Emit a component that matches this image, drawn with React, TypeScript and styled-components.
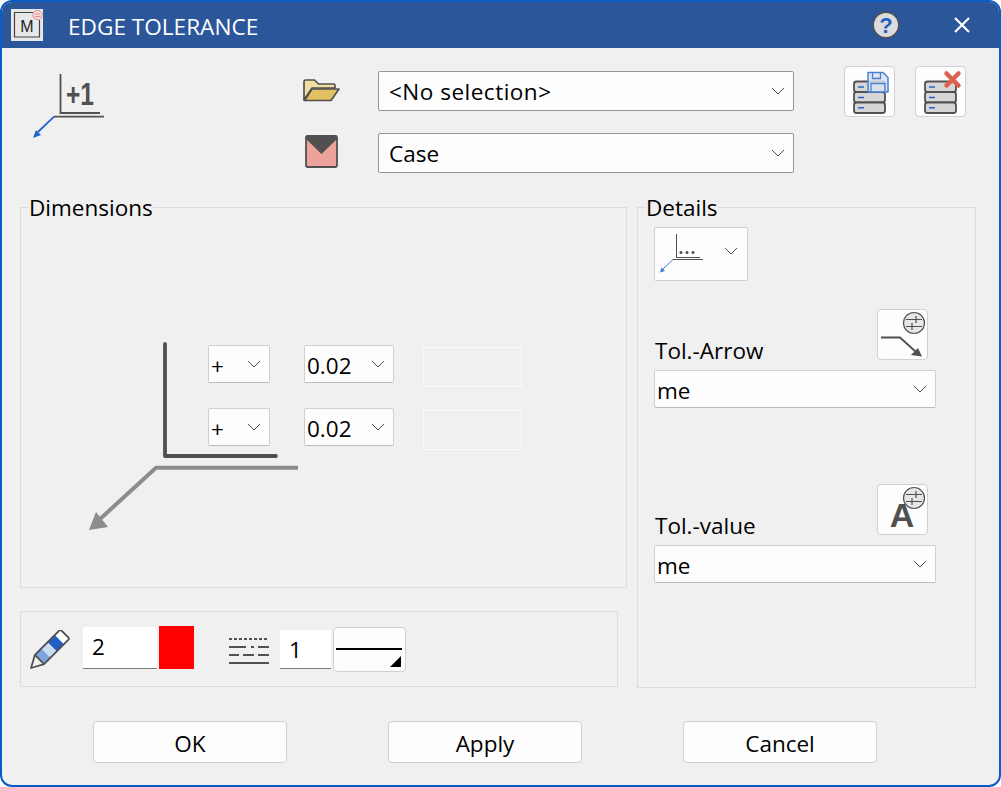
import React from 'react'
import styled, { createGlobalStyle } from 'styled-components'

const GlobalStyle = createGlobalStyle`
  html, body {
    margin: 0;
    padding: 0;
    background: #ffffff;
  }
  * {
    box-sizing: border-box;
  }
`

function Chevron() {
  return (
    <ChevronSvg viewBox="0 0 14 8" width="14" height="8">
      <path d="M1 1l6 6 6-6" fill="none" stroke="#505050" strokeWidth="1" />
    </ChevronSvg>
  )
}

function AppIcon() {
  return (
    <svg width="32" height="32" viewBox="0 0 32 32">
      <rect width="32" height="32" fill="#e8e8e8" />
      <path d="M22 3.500H3.500v24.500h25V11" fill="none" stroke="#444" strokeWidth="1.200" />
      <text x="16" y="22.500" textAnchor="middle" fontFamily="Liberation Sans, sans-serif" fontSize="16" fill="#222">M</text>
      <circle cx="26.500" cy="6" r="4.600" fill="#f4dcdc" stroke="#e58a8a" strokeWidth="1" />
      <path d="M24 5h5M24 7.500h5" stroke="#e58a8a" strokeWidth="1" />
    </svg>
  )
}

function HelpIcon() {
  return (
    <svg width="28" height="28" viewBox="0 0 28 28">
      <circle cx="14" cy="14" r="12.700" fill="#dcdcdc" stroke="#505050" strokeWidth="1.400" />
      <text x="14" y="22" textAnchor="middle" fontFamily="Liberation Sans, sans-serif" fontWeight="700" fontSize="22" fill="#1f5fc4">?</text>
    </svg>
  )
}

function CloseIcon() {
  return (
    <svg width="16" height="16" viewBox="0 0 16 16">
      <path d="M1 1l14 14M15 1L1 15" stroke="#fff" strokeWidth="2.200" />
    </svg>
  )
}

function EdgeIcon() {
  return (
    <svg width="72" height="66" viewBox="0 0 72 66">
      <path d="M27.500 0v39H67" fill="none" stroke="#505050" strokeWidth="1.800" />
      <path d="M21 42.700h50" stroke="#505050" strokeWidth="1.800" />
      <path d="M21 42.700L5 58" stroke="#1f66cc" strokeWidth="1.800" />
      <path d="M0 64l3-8 5 5z" fill="#1f66cc" />
      <text x="33" y="31" fontFamily="Liberation Sans, sans-serif" fontWeight="700" fontSize="31" textLength="28" lengthAdjust="spacingAndGlyphs" fill="#505050">+1</text>
    </svg>
  )
}

function FolderIcon() {
  return (
    <svg width="37" height="23" viewBox="0 0 37 23">
      <path d="M1 21V2.500C1 1.500 1.500 1 2.500 1h9l4 4h15c1 0 1.500.5 1.500 1.500V9H9L1 21z" fill="#f0dfa4" stroke="#505050" strokeWidth="1.700" strokeLinejoin="round" />
      <path d="M1.500 21.500L9 10h27l-8 11.500z" fill="#e2c162" stroke="#505050" strokeWidth="1.700" strokeLinejoin="round" />
    </svg>
  )
}

function EnvelopeIcon() {
  return (
    <svg width="33" height="33" viewBox="0 0 33 33">
      <rect x="1" y="1" width="31" height="31" rx="1.500" fill="#eda39b" stroke="#505050" strokeWidth="1.800" />
      <path d="M1 1h31v3L16.500 19 1 4z" fill="#505050" />
    </svg>
  )
}

// three drives, coordinates are relative to the 51px button
function DbStack() {
  return (
    <g>
      <rect x="10" y="15.500" width="31" height="10.500" rx="2.500" fill="#d6d6d6" stroke="#505050" strokeWidth="1.800" />
      <rect x="10" y="26" width="31" height="10.500" rx="2.500" fill="#d6d6d6" stroke="#505050" strokeWidth="1.800" />
      <rect x="10" y="36.500" width="31" height="10.500" rx="2.500" fill="#d6d6d6" stroke="#505050" strokeWidth="1.800" />
      <path d="M14 21h6M14 31.500h6M14 41.800h6" stroke="#1f66cc" strokeWidth="1.500" />
    </g>
  )
}

function DbSaveIcon() {
  return (
    <svg width="49" height="49" viewBox="1 1 49 49">
      <DbStack />
      <path d="M24 6.500h15l5 5v14.500H24z" fill="#d8e2f2" fillOpacity=".85" stroke="#4a80d0" strokeWidth="1.500" strokeLinejoin="round" />
      <path d="M28.500 6.500v6h8v-6M27 26v-8.500h14V26" fill="none" stroke="#4a80d0" strokeWidth="1.300" />
    </svg>
  )
}

function DbDeleteIcon() {
  return (
    <svg width="49" height="49" viewBox="1 1 49 49">
      <DbStack />
      <path d="M31.500 7.500l12 12M43.500 7.500l-12 12" stroke="#dd5f50" strokeWidth="4.500" strokeLinecap="round" />
    </svg>
  )
}

function MiniEdgeIcon() {
  return (
    <svg width="46" height="40" viewBox="0 0 46 40">
      <path d="M16.500 0v23.500H40" fill="none" stroke="#505050" strokeWidth="1" />
      <path d="M13 25.500h30" stroke="#505050" strokeWidth="1" />
      <path d="M13 25.500L2 36" stroke="#3f7ad6" strokeWidth="1" />
      <path d="M0 38.500l1.500-5 3.500 3.500z" fill="#3f7ad6" />
      <circle cx="21" cy="18.500" r="1.500" fill="#505050" />
      <circle cx="27" cy="18.500" r="1.500" fill="#505050" />
      <circle cx="33" cy="18.500" r="1.500" fill="#505050" />
    </svg>
  )
}

function ToleranceBadge() {
  return (
    <BadgeSvg viewBox="0 0 24 24" width="24" height="24">
      <circle cx="12" cy="12" r="10.500" fill="#e6e6e6" stroke="#505050" strokeWidth="1.200" />
      <path d="M4 8.500h16M4 15.500h16M14 5v7M10 12v7" stroke="#505050" strokeWidth="1.200" />
    </BadgeSvg>
  )
}

function ArrowStyleIcon() {
  return (
    <svg width="44" height="22" viewBox="0 0 44 22">
      <path d="M0 1.500h19L35 16" fill="none" stroke="#505050" strokeWidth="1.800" />
      <path d="M41 20.500l-11-1.500 7-7z" fill="#505050" />
    </svg>
  )
}

function PencilIcon() {
  return (
    <svg width="40" height="40" viewBox="0 0 40 40">
      <g transform="translate(1 38) rotate(45)">
        <rect x="-6.500" y="-48" width="13" height="8" fill="#ffffff" />
        <rect x="-6.500" y="-40" width="13" height="10" fill="#1f5fc4" />
        <rect x="-6.500" y="-30" width="13" height="9" fill="#c9dcf4" />
        <rect x="-6.500" y="-21" width="13" height="9" fill="#7ea6e0" />
        <path d="M-6.500 -12h13L0 0z" fill="#f0f0f0" />
        <path d="M-5 -48H5a1.500 1.500 0 0 1 1.500 1.500V-12L0 0-6.500 -12V-46.500A1.500 1.500 0 0 1-5 -48zM-6.500 -12h13" fill="none" stroke="#505050" strokeWidth="1.800" strokeLinejoin="round" />
      </g>
    </svg>
  )
}

function LineStylesIcon() {
  return (
    <svg width="40" height="27" viewBox="0 0 40 27">
      <path d="M0 1h40" stroke="#505050" strokeWidth="2" strokeDasharray="3 2" />
      <path d="M0 9h17M22 9h3M29 9h11" stroke="#505050" strokeWidth="2" />
      <path d="M0 17h10M14 17h11M29 17h11" stroke="#505050" strokeWidth="2" />
      <path d="M0 25h40" stroke="#505050" strokeWidth="2" />
    </svg>
  )
}

function DimensionSketch() {
  return (
    <SketchSvg width="230" height="200" viewBox="0 0 230 200">
      <path d="M77 3v112h111" fill="none" stroke="#505050" strokeWidth="3.800" strokeLinecap="round" strokeLinejoin="round" />
      <path d="M210 126.700H68L11 179" fill="none" stroke="#8c8c8c" strokeWidth="4" strokeLinejoin="round" />
      <path d="M1 189l7-18 12 15z" fill="#8c8c8c" />
    </SketchSvg>
  )
}

function Combo({ value, width, height, strong, tracking }: { value: string; width: number; height: number; strong?: boolean; tracking?: number }) {
  return (
    <ComboBox $width={width} $height={height} $strong={strong} $tracking={tracking}>
      <ComboText $strong={strong}>{value}</ComboText>
      <Chevron />
    </ComboBox>
  )
}

export default function App() {
  return (
    <>
      <GlobalStyle />
      <Dialog>
        <TitleBar>
          <AppIcon />
          <Title>EDGE TOLERANCE</Title>
          <TitleActions>
            <HelpIcon />
            <CloseIcon />
          </TitleActions>
        </TitleBar>

        <TopRow>
          <EdgeSlot>
            <EdgeIcon />
          </EdgeSlot>
          <SelectorColumn>
            <SelectorRow>
              <SelectorIcon $inset={0} $lift={2}>
                <FolderIcon />
              </SelectorIcon>
              <Combo value="<No selection>" width={416} height={40} strong tracking={0.5} />
            </SelectorRow>
            <SelectorRow>
              <SelectorIcon $inset={2} $lift={4}>
                <EnvelopeIcon />
              </SelectorIcon>
              <Combo value="Case" width={416} height={40} strong />
            </SelectorRow>
          </SelectorColumn>
          <DbActions>
            <IconButton>
              <DbSaveIcon />
            </IconButton>
            <IconButton>
              <DbDeleteIcon />
            </IconButton>
          </DbActions>
        </TopRow>

        <MainRow>
          <LeftColumn>
            <DimensionsGroup>
              <Legend>Dimensions</Legend>
              <DimensionSketch />
              <ToleranceGrid>
                <Combo value="+" width={62} height={38} />
                <Combo value="0.02" width={90} height={38} />
                <GhostInput />
                <Combo value="+" width={62} height={38} />
                <Combo value="0.02" width={90} height={38} />
                <GhostInput />
              </ToleranceGrid>
            </DimensionsGroup>
            <PenBar>
              <PencilSlot>
                <PencilIcon />
              </PencilSlot>
              <PenValue $width={74} $height={42} $top={0} $raise={3}>2</PenValue>
              <ColorSwatch />
              <LineStyleSlot>
                <LineStylesIcon />
              </LineStyleSlot>
              <PenValue $width={51} $height={39} $top={3} $raise={0}>1</PenValue>
              <LineButton />
            </PenBar>
          </LeftColumn>

          <DetailsGroup>
            <Legend>Details</Legend>
            <IconCombo>
              <MiniEdgeIcon />
              <Chevron />
            </IconCombo>
            <DetailBlock $top={28}>
              <DetailHead>
                <DetailLabel>Tol.-Arrow</DetailLabel>
                <SquareButton>
                  <ToleranceBadge />
                  <ArrowStyleIcon />
                </SquareButton>
              </DetailHead>
              <Combo value="me" width={282} height={38} />
            </DetailBlock>
            <DetailBlock $top={76}>
              <DetailHead>
                <DetailLabel>Tol.-value</DetailLabel>
                <SquareButton>
                  <ToleranceBadge />
                  <BigA>A</BigA>
                </SquareButton>
              </DetailHead>
              <Combo value="me" width={282} height={38} />
            </DetailBlock>
          </DetailsGroup>
        </MainRow>

        <ButtonRow>
          <PushButton>OK</PushButton>
          <PushButton>Apply</PushButton>
          <PushButton>Cancel</PushButton>
        </ButtonRow>
      </Dialog>
    </>
  )
}

const uiFont = `"Open Sans", "Noto Sans", sans-serif`

const Dialog = styled.div`
  width: 1001px;
  height: 787px;
  display: flex;
  flex-direction: column;
  background: #f0f0f0;
  border: 2px solid #0a5cc2;
  border-radius: 12px;
  overflow: hidden;
  font-family: ${uiFont};
  font-size: 22.5px;
  color: #000;
`

const TitleBar = styled.div`
  height: 46px;
  flex: none;
  display: flex;
  align-items: center;
  padding-left: 9px;
  background: #2b579a;
`

const Title = styled.div`
  margin-left: 25px;
  padding-top: 2px;
  color: #fff;
  font-size: 22.6px;
`

const TitleActions = styled.div`
  margin-left: auto;
  margin-right: 29px;
  display: flex;
  align-items: center;
  gap: 54px;
`

const TopRow = styled.div`
  display: flex;
  padding: 18px 0 0 31px;
  height: 148px;
  flex: none;
`

const EdgeSlot = styled.div`
  width: 270px;
  padding-top: 8px;
`

const SelectorColumn = styled.div`
  display: flex;
  flex-direction: column;
  gap: 22px;
  padding-top: 5px;
`

const SelectorRow = styled.div`
  display: flex;
  align-items: center;
`

const SelectorIcon = styled.div<{ $inset: number; $lift: number }>`
  width: 75px;
  display: flex;
  padding: 0 0 ${p => p.$lift}px ${p => p.$inset}px;
`

const DbActions = styled.div`
  display: flex;
  gap: 20px;
  margin-left: 50px;
  align-items: flex-start;
`

const IconButton = styled.div`
  width: 51px;
  height: 51px;
  display: flex;
  background: #fdfdfd;
  border: 1px solid #d0d0d0;
  border-radius: 4px;
`

const MainRow = styled.div`
  display: flex;
  gap: 10px;
  padding-left: 18px;
  height: 492px;
  flex: none;
`

const LeftColumn = styled.div`
  width: 607px;
  display: flex;
  flex-direction: column;
  gap: 23px;
`

const Legend = styled.legend`
  padding: 0;
  margin-left: 8px;
  height: 22px;
  font-size: 22.5px;
  line-height: 24px;
`

const DimensionsGroup = styled.fieldset`
  position: relative;
  height: 392px;
  margin: 0;
  padding: 0;
  min-width: 0;
  border: 1px solid #dcdcdc;
`

const SketchSvg = styled.svg`
  position: absolute;
  left: 67px;
  top: 123px;
`

const ToleranceGrid = styled.div`
  display: grid;
  grid-template-columns: 62px 90px 99px;
  column-gap: 34px;
  row-gap: 21px;
  padding: 127px 0 0 187px;
  position: relative;
  align-items: start;
  width: fit-content;
`

const ComboBox = styled.div<{ $width: number; $height: number; $strong?: boolean; $tracking?: number }>`
  width: ${p => p.$width}px;
  height: ${p => p.$height}px;
  flex: none;
  display: flex;
  align-items: center;
  justify-content: space-between;
  padding: 0 8px 0 ${p => (p.$strong ? 10 : 2)}px;
  background: #fdfdfd;
  border: 1px solid ${p => (p.$strong ? '#969696' : '#d0d0d0')};
  border-bottom-color: ${p => (p.$strong ? '#969696' : '#bcbcbc')};
  border-radius: 2px;
  font-size: 22.5px;
  letter-spacing: ${p => p.$tracking ?? 0}px;
  white-space: nowrap;
`

const ComboText = styled.span<{ $strong?: boolean }>`
  padding-top: ${p => (p.$strong ? 0 : 2)}px;
`

const ChevronSvg = styled.svg`
  flex: none;
`

const GhostInput = styled.div`
  width: 99px;
  height: 40px;
  margin: 2px 0 0 -5px;
  border: 1px solid #fafafa;
`

const PenBar = styled.div`
  width: 598px;
  height: 76px;
  display: flex;
  align-items: flex-start;
  padding: 15px 0 0 9px;
  border: 1px solid #dcdcdc;
`

const PencilSlot = styled.div`
  display: flex;
  margin: 3px 13px 0 0;
`

const PenValue = styled.div<{ $width: number; $height: number; $top: number; $raise: number }>`
  width: ${p => p.$width}px;
  height: ${p => p.$height}px;
  margin-top: ${p => p.$top}px;
  display: flex;
  align-items: center;
  padding: 0 0 ${p => p.$raise}px 9px;
  background: #fff;
  border-bottom: 1px solid #7a7a7a;
  font-size: 22.5px;
`

const ColorSwatch = styled.div`
  width: 35px;
  height: 43px;
  margin: -1px 0 0 2px;
  background: #ff0000;
`

const LineStyleSlot = styled.div`
  display: flex;
  margin: 11px 11px 0 35px;
`

const LineButton = styled.div`
  position: relative;
  width: 73px;
  height: 45px;
  margin-left: 2px;
  background: #fdfdfd;
  border: 1px solid #d0d0d0;
  border-radius: 4px;

  &::before {
    content: '';
    position: absolute;
    left: 2px;
    right: 3px;
    top: 20px;
    height: 2px;
    background: #000;
  }

  &::after {
    content: '';
    position: absolute;
    right: 4px;
    bottom: 4px;
    width: 11px;
    height: 11px;
    background: #000;
    clip-path: polygon(100% 0, 100% 100%, 0 100%);
  }
`

const DetailsGroup = styled.fieldset`
  width: 339px;
  height: 492px;
  margin: 0;
  padding: 0 0 0 16px;
  min-width: 0;
  border: 1px solid #dcdcdc;

  ${Legend} {
    margin-left: -8px;
  }
`

const IconCombo = styled.div`
  width: 94px;
  height: 54px;
  margin-top: 9px;
  display: flex;
  align-items: flex-end;
  justify-content: space-between;
  padding: 0 9px 6px 5px;
  background: #fdfdfd;
  border: 1px solid #d0d0d0;
  border-radius: 2px;

  ${ChevronSvg} {
    align-self: center;
  }
`

const DetailBlock = styled.div<{ $top: number }>`
  width: 282px;
  margin-top: ${p => p.$top}px;
  display: flex;
  flex-direction: column;
  gap: 10px;
`

const DetailHead = styled.div`
  display: flex;
  justify-content: space-between;
  align-items: flex-end;
  padding: 0 8px 0 1px;
`

const DetailLabel = styled.div`
  font-size: 22.5px;
  line-height: 30px;
  margin-bottom: -6px;
`

const SquareButton = styled.div`
  position: relative;
  width: 51px;
  height: 51px;
  display: flex;
  flex-direction: column;
  align-items: center;
  justify-content: flex-end;
  padding-bottom: 1px;
  background: #fdfdfd;
  border: 1px solid #d0d0d0;
  border-radius: 4px;
`

const BadgeSvg = styled.svg`
  position: absolute;
  top: 1px;
  right: 1px;
`

const BigA = styled.span`
  margin: 0 0 1px -1px;
  font-family: "Liberation Sans", sans-serif;
  font-weight: 700;
  font-size: 34px;
  line-height: 34px;
  color: #505050;
`

const ButtonRow = styled.div`
  display: flex;
  gap: 101px;
  padding: 33px 0 0 91px;
`

const PushButton = styled.div`
  width: 194px;
  height: 42px;
  display: flex;
  align-items: center;
  justify-content: center;
  padding-top: 2px;
  background: #fdfdfd;
  border: 1px solid #d0d0d0;
  border-radius: 4px;
  font-size: 22.5px;
`
